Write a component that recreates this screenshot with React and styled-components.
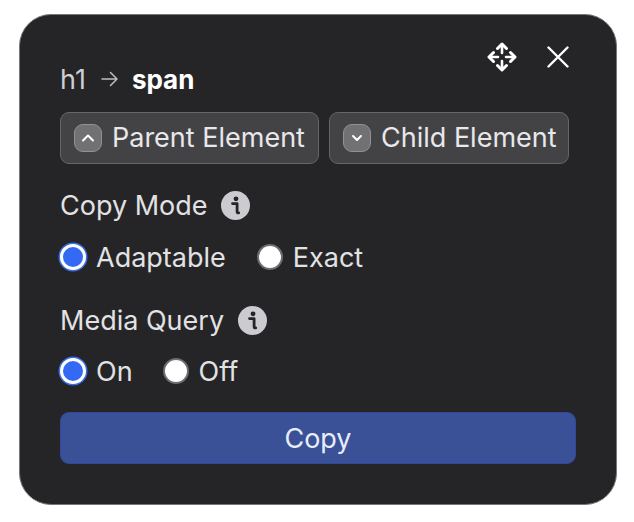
import React from 'react';
import styled, { createGlobalStyle } from 'styled-components';

const Global = createGlobalStyle`
  html, body { margin: 0; padding: 0; background: #fff; }
  body { font-family: Inter, "Liberation Sans", sans-serif; }
`;

const Page = styled.div`
  width: 634px;
  height: 522px;
  padding: 14px 0 0 19px;
  box-sizing: border-box;
`;

const Panel = styled.div`
  position: relative;
  width: 598px;
  height: 491px;
  box-sizing: border-box;
  padding: 48px 40px 40px;
  background: #252527;
  border: 1px solid #77777a;
  border-radius: 32px;
  display: flex;
  flex-direction: column;
  color: #e6e6e8;
`;

const Tools = styled.div`
  position: absolute;
  top: 27px;
  right: 47px;
  display: flex;
  align-items: center;
  gap: 30px;
`;

const Crumbs = styled.div`
  height: 32px;
  display: flex;
  align-items: center;
  font-size: 27px;
  color: #cfcfd2;
`;

const CrumbArrow = styled.span`
  display: flex;
  margin: 0 14px 0 15px;
`;

const Current = styled.span`
  font-size: 26px;
  font-weight: 700;
  color: #fff;
`;

const NavRow = styled.div`
  display: flex;
  gap: 10px;
  margin-top: 17px;
`;

const NavButton = styled.div`
  width: ${p => p.$width}px;
  height: 52px;
  box-sizing: border-box;
  display: flex;
  align-items: center;
  gap: ${p => p.$gap}px;
  padding: 0 0 2px 13px;
  background: #434346;
  border: 1.5px solid #666669;
  border-radius: 9px;
  font-size: 27px;
  color: #e8e8ea;
`;

const KeyCap = styled.span`
  width: 28px;
  height: 28px;
  margin-top: 2px;
  box-sizing: border-box;
  display: flex;
  align-items: center;
  justify-content: center;
  background: #717174;
  border: 1.5px solid #929295;
  border-radius: 9px;
`;

const Label = styled.div`
  display: flex;
  align-items: center;
  gap: ${p => p.$gap}px;
  height: 32px;
  font-size: 27px;
  color: #e2e2e4;
  margin-top: ${p => p.$top}px;
`;

const Options = styled.div`
  display: flex;
  align-items: center;
  gap: ${p => p.$gap}px;
  height: 32px;
  margin-top: ${p => p.$top}px;
`;

const Option = styled.div`
  display: flex;
  align-items: center;
  gap: 10px;
  font-size: 27px;
  color: #e2e2e4;
`;

const Radio = styled.span`
  width: 26px;
  height: 26px;
  box-sizing: border-box;
  border-radius: 50%;
  background: ${p => (p.$on ? '#3369f3' : '#ffffff')};
  border: ${p => (p.$on ? '3px solid #ffffff' : '2px solid #6d6d70')};
  box-shadow: ${p => (p.$on ? '0 0 0 1.5px #3a6de8' : 'none')};
`;

const CopyButton = styled.div`
  margin-top: 25px;
  height: 52px;
  box-sizing: border-box;
  display: flex;
  align-items: center;
  justify-content: center;
  background: #3a5198;
  border: 1px solid #33489a;
  border-radius: 9px;
  font-size: 27px;
  color: #e8edfa;
`;

const InfoIcon = () => (
  <svg width="29" height="29" viewBox="0 0 29 29">
    <circle cx="14.5" cy="14.5" r="14.5" fill="#ccccd0" />
    <circle cx="15" cy="7.8" r="2.4" fill="#252527" />
    <path d="M11.5 12.6h4.6v8.2c0 .9.5 1.2 1.6 1.1M11.5 12.6h2" fill="none" stroke="#252527" strokeWidth="2.8" strokeLinecap="round" strokeLinejoin="round" />
  </svg>
);

const MoveIcon = () => (
  <svg width="30" height="30" viewBox="0 0 30 30" fill="none" stroke="#fff" strokeLinecap="round" strokeLinejoin="round">
    <path d="M10.500 6.500 15 2l4.500 4.500M10.500 23.500 15 28l4.500-4.500M6.500 10.500 2 15l4.500 4.500M23.500 10.500 28 15l-4.500 4.500" strokeWidth="3" />
    <path d="M15 3.500v7.500M15 19v7.500M3.500 15H11M19 15h7.500" strokeWidth="2.600" />
  </svg>
);

const CloseIcon = () => (
  <svg width="22" height="22" viewBox="0 0 22 22" fill="none" stroke="#fff" strokeWidth="2.4" strokeLinecap="round">
    <path d="M1.500 1.500l19 19M20.500 1.500l-19 19" />
  </svg>
);

const ArrowIcon = () => (
  <svg width="17" height="16" viewBox="0 0 17 16" fill="none" stroke="#bdbdc0" strokeWidth="1.500" strokeLinecap="round" strokeLinejoin="round">
    <path d="M1 8h15M9.500 1.500 16 8l-6.500 6.500" />
  </svg>
);

const Chevron = ({ up }) => (
  <svg width="14" height="10" viewBox="0 0 14 10" fill="none" stroke="#fff" strokeWidth="2" strokeLinecap="round" strokeLinejoin="round">
    <path d={up ? 'M2 7.500 7 2.500l5 5' : 'M3 3l4 4 4-4'} />
  </svg>
);

export default function App() {
  return (
    <>
      <Global />
      <Page>
        <Panel>
          <Tools>
            <MoveIcon />
            <CloseIcon />
          </Tools>
          <Crumbs>
            h1
            <CrumbArrow><ArrowIcon /></CrumbArrow>
            <Current>span</Current>
          </Crumbs>
          <NavRow>
            <NavButton $width={259} $gap={10}><KeyCap><Chevron up /></KeyCap>Parent Element</NavButton>
            <NavButton $width={240} $gap={10}><KeyCap><Chevron /></KeyCap>Child Element</NavButton>
          </NavRow>
          <Label $top={25} $gap={13}>Copy Mode <InfoIcon /></Label>
          <Options $top={20} $gap={31}>
            <Option><Radio $on />Adaptable</Option>
            <Option><Radio />Exact</Option>
          </Options>
          <Label $top={31} $gap={14}>Media Query <InfoIcon /></Label>
          <Options $top={19} $gap={30}>
            <Option><Radio $on />On</Option>
            <Option><Radio />Off</Option>
          </Options>
          <CopyButton>Copy</CopyButton>
        </Panel>
      </Page>
    </>
  );
}
